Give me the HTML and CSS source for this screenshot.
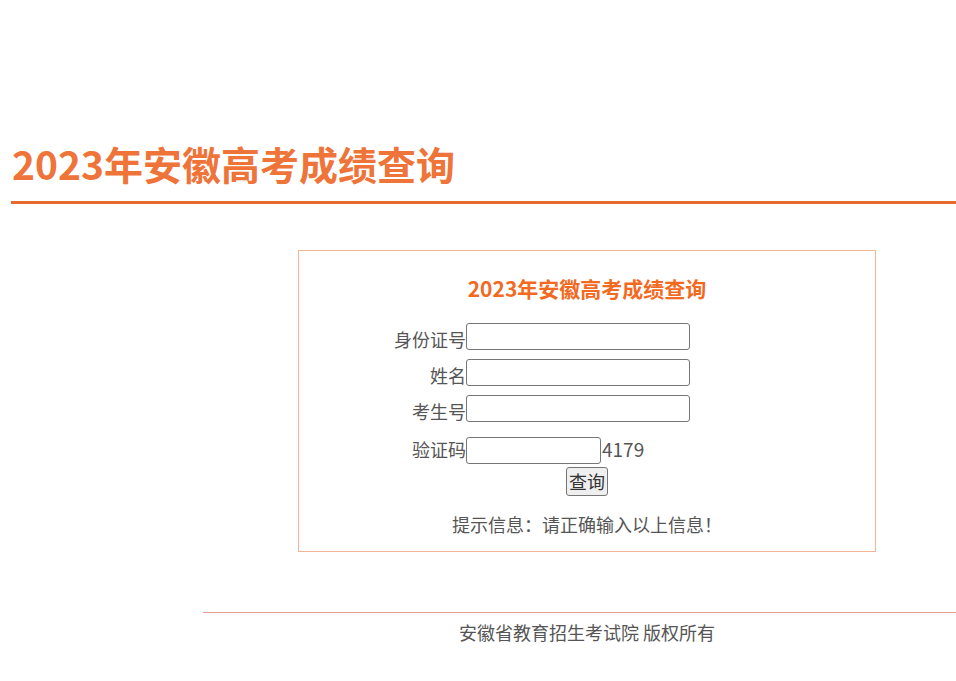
FILE: index.html
```html
<!DOCTYPE html>
<html lang="zh-CN">
<head>
<meta charset="utf-8">
<title>2023年安徽高考成绩查询</title>
<link rel="stylesheet" href="styles.css">
</head>
<body>
<div class="page">
  <header class="header">
    <h1 class="main-title">2023年安徽高考成绩查询</h1>
    <div class="bar"></div>
  </header>
  <div class="box">
    <h2 class="box-title">2023年安徽高考成绩查询</h2>
    <div class="row"><label class="lbl">身份证号</label><input class="inp" type="text"></div>
    <div class="row"><label class="lbl">姓名</label><input class="inp" type="text"></div>
    <div class="row"><label class="lbl">考生号</label><input class="inp" type="text"></div>
    <div class="row row-code"><label class="lbl">验证码</label><input class="inp inp-code" type="text"><span class="code">4179</span></div>
    <div class="btn-row"><button class="btn" type="button">查询</button></div>
    <p class="hint">提示信息：请正确输入以上信息！</p>
  </div>
  <footer class="footer">
    <div class="footer-line"></div>
    <p class="footer-text">安徽省教育招生考试院 版权所有</p>
  </footer>
</div>
</body>
</html>
```
FILE: styles.css
```css
html, body {
  margin: 0;
  padding: 0;
  background: #fff;
  overflow: hidden;
}
body {
  font-family: "Noto Sans CJK SC", "Noto Sans", sans-serif;
  color: #555;
}
.page {
  width: 956px;
  overflow: hidden;
}
.header {
  margin-left: 11px;
  padding-top: 135px;
}
.main-title {
  margin: 0;
  font-size: 39px;
  line-height: 56px;
  font-weight: bold;
  color: #ef7439;
  padding-left: 1px;
}
.bar {
  margin-top: 10px;
  height: 3px;
  background: #e8692e;
}
.box {
  margin-top: 46px;
  margin-left: 298px;
  width: 576px;
  border: 1px solid #f4b496;
  padding: 22px 0 12px;
}
.box-title {
  margin: 0 0 20px;
  text-align: center;
  font-size: 21px;
  line-height: 30px;
  font-weight: bold;
  color: #f26a1f;
}
.row {
  display: flex;
  align-items: flex-end;
  height: 27px;
  margin-bottom: 9px;
}
.row-code {
  margin-top: 15px;
  margin-bottom: 3px;
  align-items: flex-start;
}
.lbl {
  width: 167px;
  text-align: right;
  font-size: 18px;
  line-height: 22px;
  color: #555;
}
.row-code .lbl {
  line-height: 24px;
}
.inp {
  box-sizing: border-box;
  width: 224px;
  height: 27px;
  margin: 0;
  border: 1px solid #767676;
  border-radius: 3px;
  padding: 1px 2px;
  font-size: 16px;
}
.inp-code {
  width: 135px;
}
.code {
  font-size: 19px;
  line-height: 24px;
  margin-top: 0;
  padding-left: 1px;
  color: #555;
}
.btn-row {
  display: flex;
  justify-content: center;
}
.btn {
  box-sizing: border-box;
  height: 29px;
  padding: 0 2px;
  font-family: "Noto Sans CJK SC", sans-serif;
  font-size: 18px;
  line-height: 25px;
  color: #333;
  background: #efefef;
  border: 1px solid #767676;
  border-radius: 3px;
}
.hint {
  margin: 13px 0 0;
  text-align: center;
  font-size: 18px;
  line-height: 30px;
  color: #555;
}
.footer {
  margin-top: 60px;
  margin-left: 203px;
  width: 768px;
}
.footer-line {
  height: 1px;
  background: #e8a08e;
}
.footer-text {
  margin: 7px 0 0;
  text-align: center;
  font-size: 18px;
  line-height: 24px;
  color: #555;
}
```
